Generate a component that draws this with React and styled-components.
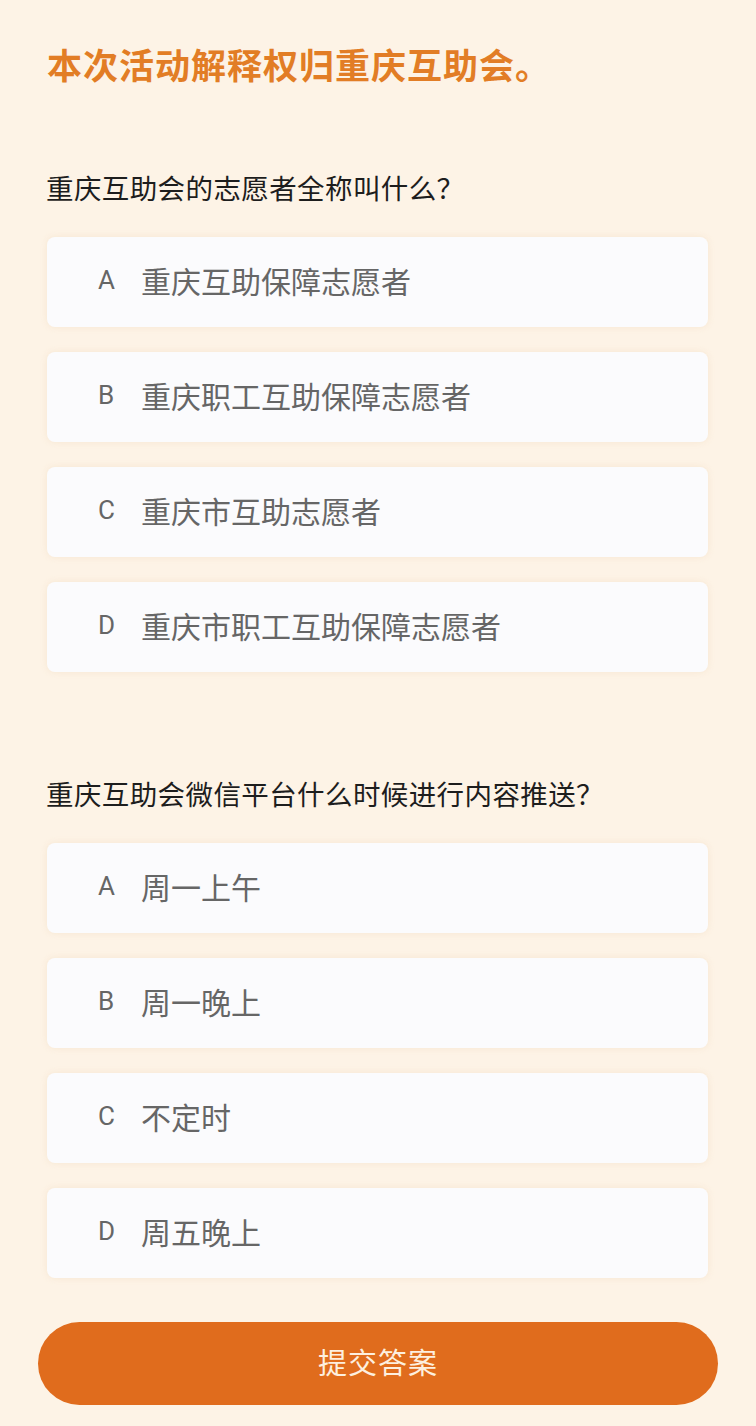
import React from 'react';
import styled, { createGlobalStyle } from 'styled-components';

const GlobalStyle = createGlobalStyle`
  html, body {
    margin: 0;
    padding: 0;
    background: #fdf3e6;
  }
  body {
    font-family: "Noto Sans CJK SC", "Noto Sans", sans-serif;
  }
`;

const Page = styled.div`
  min-height: 1426px;
  box-sizing: border-box;
  padding: 41px 48px 20px 47px;
  background: #fdf3e6;
`;

const Title = styled.h1`
  margin: 0;
  font-size: 35px;
  line-height: 46px;
  font-weight: 700;
  color: #e27d25;
  letter-spacing: 1px;
`;

const Section = styled.section`
  margin-top: ${(p) => p.$top}px;
`;

const Question = styled.p`
  margin: 0 0 30px -1px;
  font-size: 27.5px;
  line-height: 40px;
  color: #1d1d1d;
  letter-spacing: 0.4px;
`;

const Options = styled.ul`
  list-style: none;
  margin: 0;
  padding: 0;
  display: flex;
  flex-direction: column;
  gap: 25px;
`;

const Option = styled.li`
  display: flex;
  align-items: center;
  height: 90px;
  box-sizing: border-box;
  padding: 0 0 4px 51px;
  background: #fbfbfd;
  border-radius: 8px;
  box-shadow: 0 0 6px rgba(240, 215, 185, 0.45);
  color: #666;
`;

const Letter = styled.span`
  width: 43px;
  font-family: Roboto, "Noto Sans", sans-serif;
  font-size: 26px;
`;

const OptionText = styled.span`
  font-size: 30px;
  line-height: 40px;
`;

const Submit = styled.button`
  display: block;
  width: 680px;
  height: 83px;
  margin: 44px 0 0 -9px;
  padding: 0 0 6px;
  border: none;
  border-radius: 42px;
  background: #e06c1d;
  color: #fdefdf;
  font-family: "Noto Sans CJK SC", sans-serif;
  font-size: 29px;
  letter-spacing: 1px;
`;

const quiz = [
  {
    q: '重庆互助会的志愿者全称叫什么？',
    options: ['重庆互助保障志愿者', '重庆职工互助保障志愿者', '重庆市互助志愿者', '重庆市职工互助保障志愿者'],
  },
  {
    q: '重庆互助会微信平台什么时候进行内容推送？',
    options: ['周一上午', '周一晚上', '不定时', '周五晚上'],
  },
];

const letters = ['A', 'B', 'C', 'D'];

const App = () => {
  return (
    <>
      <GlobalStyle />
      <Page>
        <Title>本次活动解释权归重庆互助会。</Title>
        {quiz.map((item, i) => (
          <Section key={i} $top={i === 0 ? 80 : 101}>
            <Question>{item.q}</Question>
            <Options>
              {item.options.map((o, j) => (
                <Option key={j}>
                  <Letter>{letters[j]}</Letter>
                  <OptionText>{o}</OptionText>
                </Option>
              ))}
            </Options>
          </Section>
        ))}
        <Submit>提交答案</Submit>
      </Page>
    </>
  );
};

export default App;
